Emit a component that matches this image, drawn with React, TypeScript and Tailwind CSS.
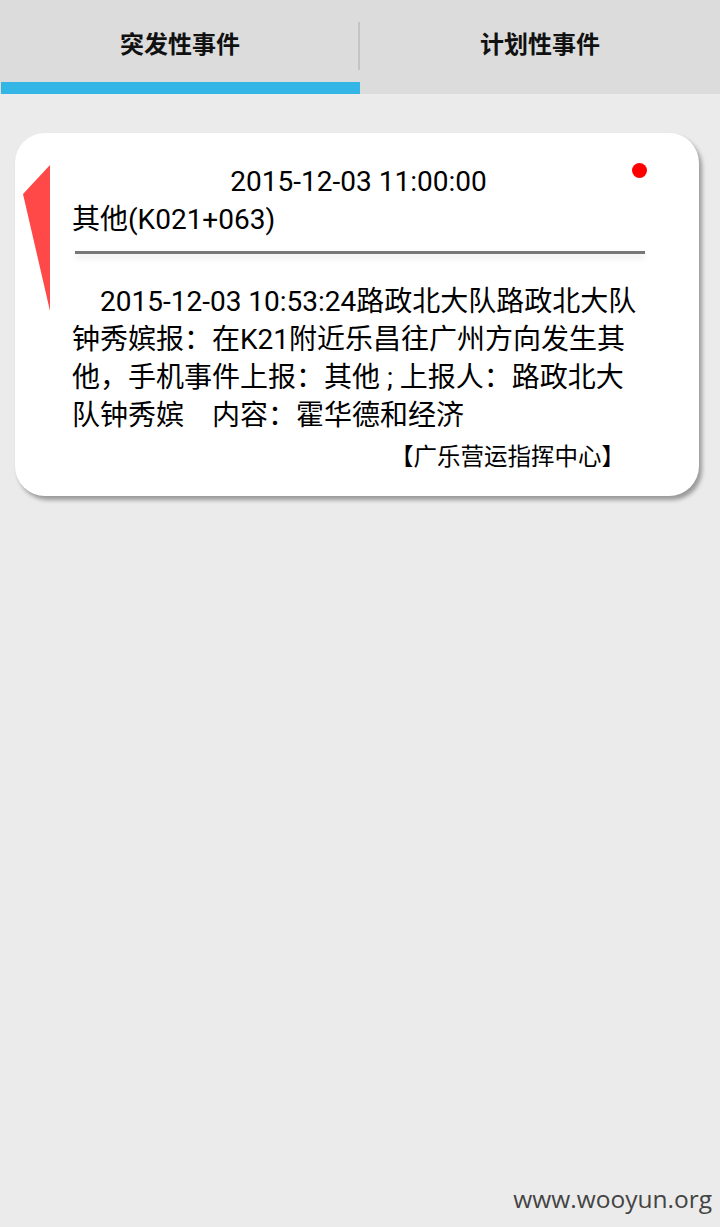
import React from 'react';

const tabs = ['突发性事件', '计划性事件'];

export default function App() {
  const active = 0;

  return (
    <div
      className="flex h-[1227px] w-[720px] flex-col overflow-hidden bg-[#ebebeb] text-black"
      style={{ fontFamily: 'Roboto, "Noto Sans CJK SC", sans-serif' }}
    >
      {/* Tabs */}
      <div className="flex h-[94px] bg-[#dcdcdc]">
        {tabs.map((t, i) => (
          <div key={t} className="relative flex flex-1 flex-col">
            <div className="flex flex-1 items-center justify-center pt-[8px] text-[24px] font-bold text-[#111]">
              {t}
            </div>
            {i === 0 && <div className="absolute right-0 top-[22px] h-[48px] w-[2px] bg-[#c4c4c4]" />}
            <div className={`ml-[1px] h-[12px] ${i === active ? 'bg-[#33b5e5]' : 'bg-transparent'}`} />
          </div>
        ))}
      </div>

      {/* Event card */}
      <div className="relative mx-[15px] mt-[39px] w-[684px] rounded-[30px] bg-white pb-[24px] pl-[57px] pr-[54px] pt-[30px] shadow-[3px_4px_4px_rgba(0,0,0,0.35)]">
        <svg className="absolute left-[7px] top-[32px]" width="30" height="146" viewBox="0 0 30 146">
          <polygon points="28,0 1,29 28,146" fill="#ff4848" />
        </svg>
        <div className="absolute right-[52px] top-[30px] h-[15px] w-[15px] rounded-full bg-[#ff0000]" />

        <div className="text-center text-[28px] leading-[38px]">2015-12-03 11:00:00</div>
        <div className="text-[28px] leading-[38px]">其他(K021+063)</div>

        <div className="ml-[3px] mt-[12px] h-[3px] bg-[#777] shadow-[0_4px_6px_rgba(0,0,0,0.12)]" />

        <p className="mt-[29px] indent-7 text-[28px] leading-[38px]">
          2015-12-03 10:53:24路政北大队路政北大队钟秀嫔报：在K21附近乐昌往广州方向发生其他，手机事件上报：其他 ; 上报人：路政北大队钟秀嫔　内容：霍华德和经济
        </p>

        <div className="mr-[20px] mt-[7px] text-right text-[23.5px] leading-[30px]">【广乐营运指挥中心】</div>
      </div>

      {/* Watermark */}
      <div
        className="mt-auto pb-[13px] pr-[8px] text-right text-[24.5px] leading-[30px] text-[#444]"
        style={{ fontFamily: '"Open Sans", sans-serif' }}
      >
        www.wooyun.org
      </div>
    </div>
  );
}
